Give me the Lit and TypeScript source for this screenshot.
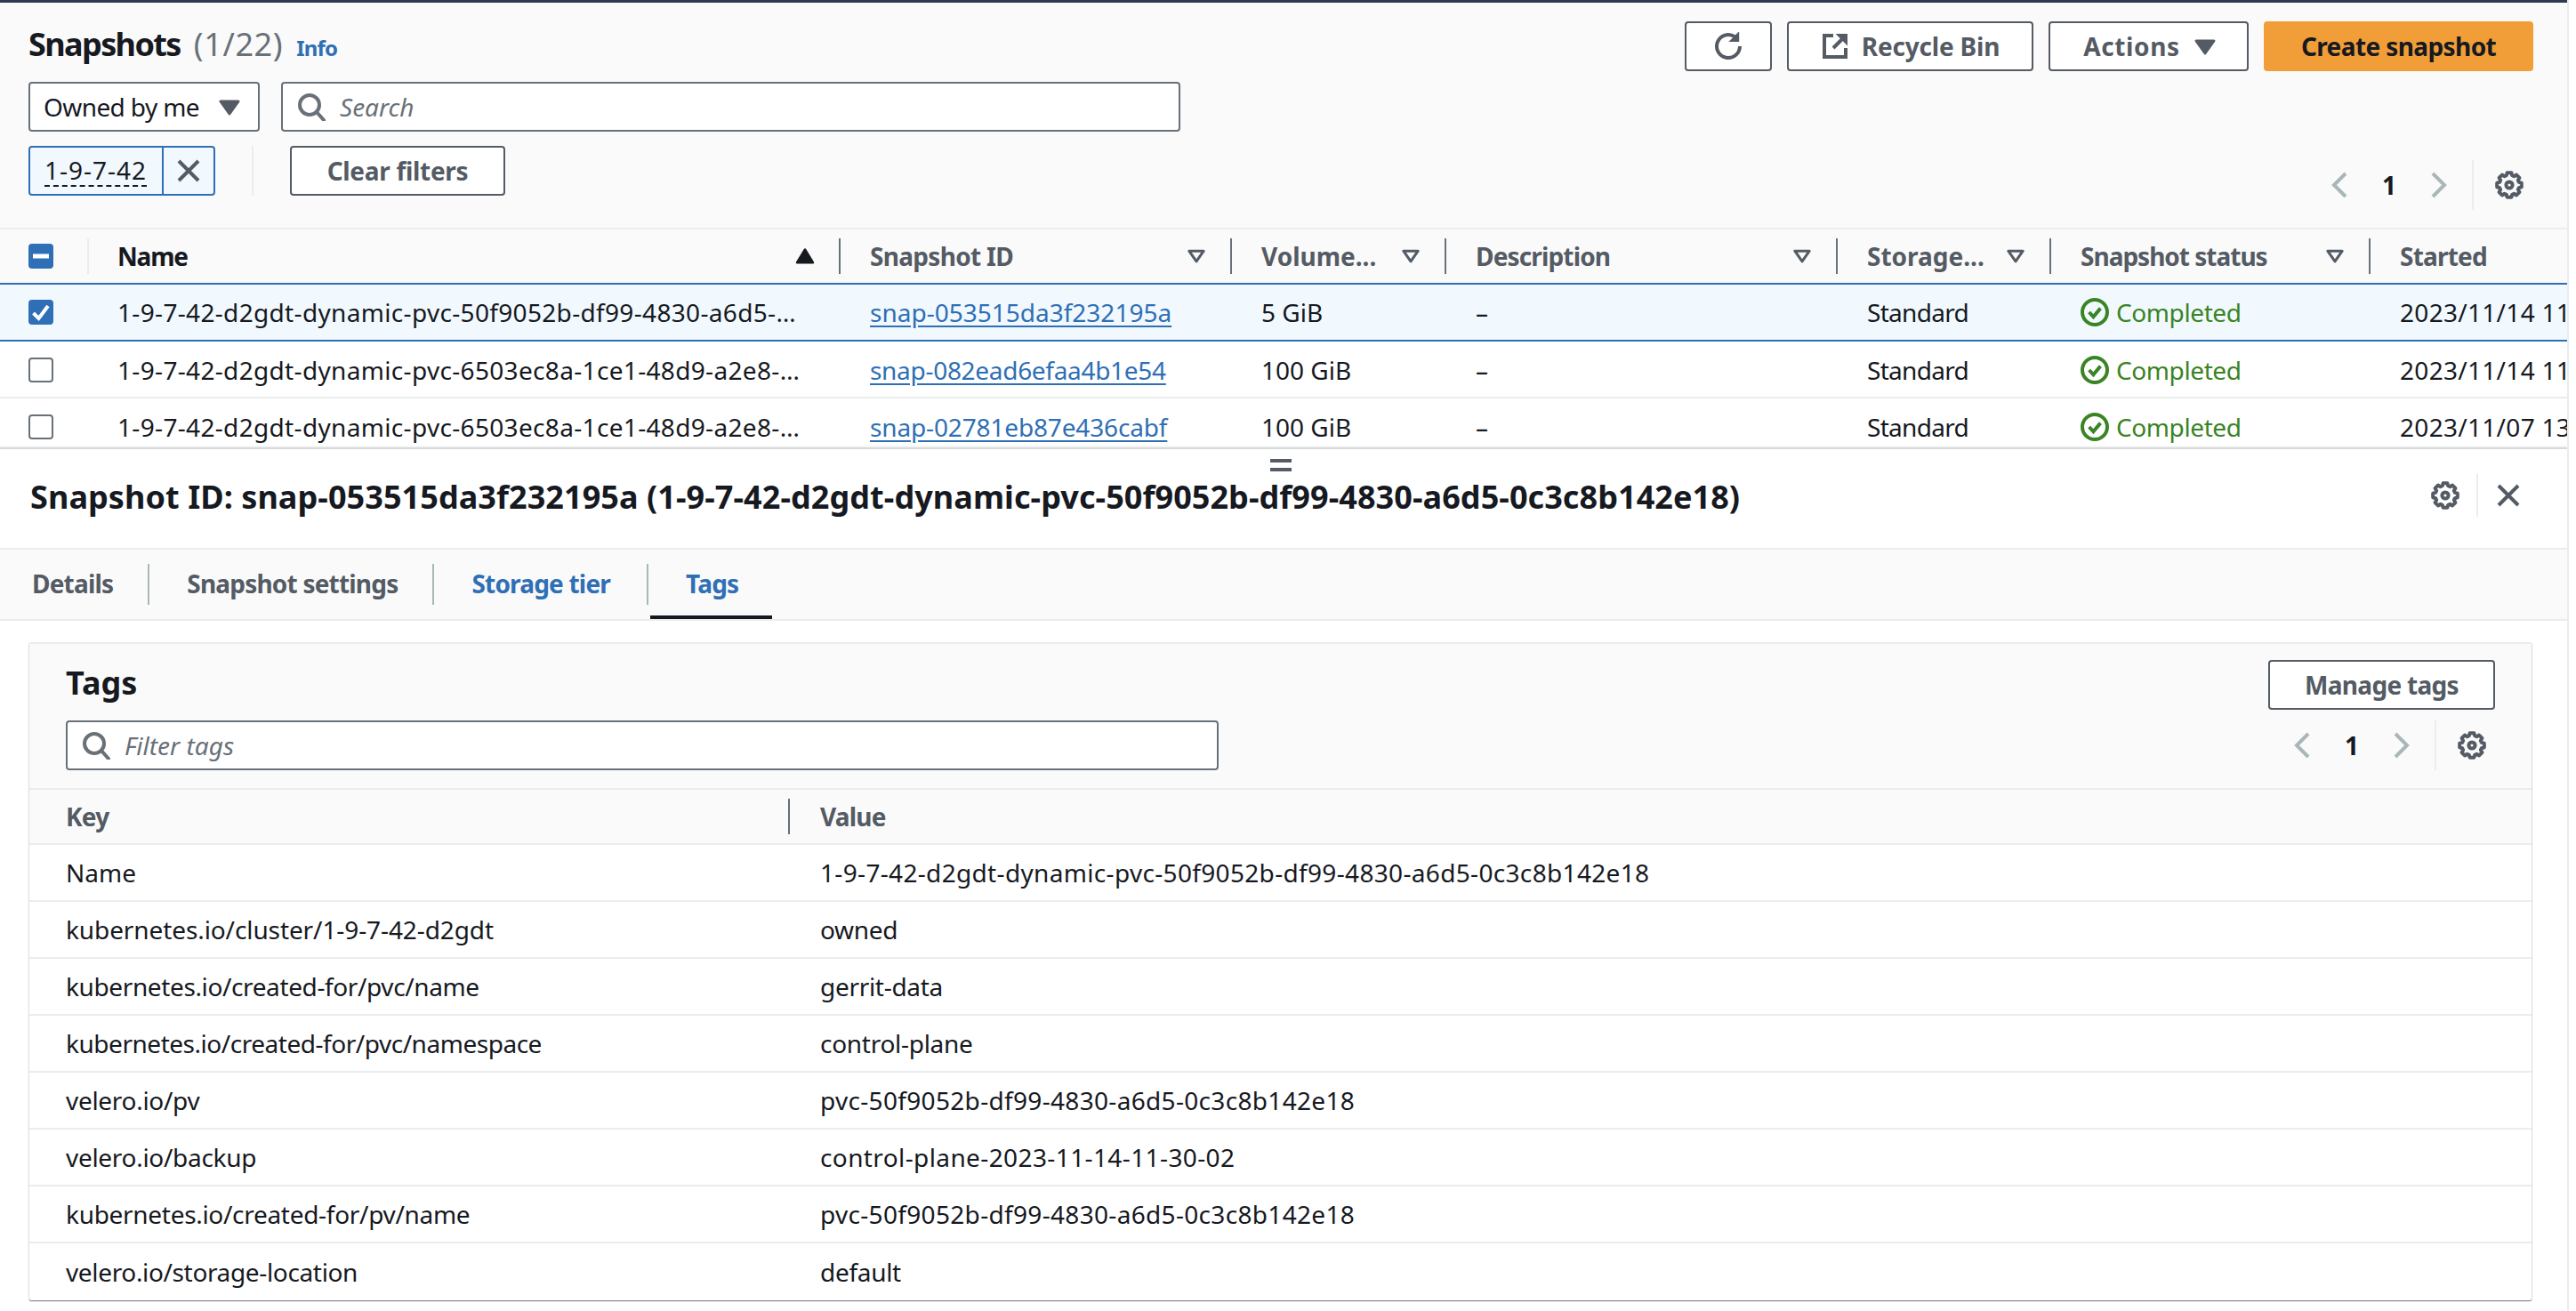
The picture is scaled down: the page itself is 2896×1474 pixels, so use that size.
import { LitElement, html, css, svg } from 'lit';
import { customElement } from 'lit/decorators.js';

const LONG_ONE = '1-9-7-42-d2gdt-dynamic-pvc-50f9052b-df99-4830-a6d5-0c3c8b142e18';
const LONG_TWO = '1-9-7-42-d2gdt-dynamic-pvc-6503ec8a-1ce1-48d9-a2e8-4c5b0f1e7a21';

const snapshots = [
  { name: LONG_ONE, id: 'snap-053515da3f232195a', idLs: 0, size: '5 GiB', started: '2023/11/14 11:30 GMT+8', selected: true },
  { name: LONG_TWO, id: 'snap-082ead6efaa4b1e54', idLs: -0.3, size: '100 GiB', started: '2023/11/14 11:30 GMT+8', selected: false },
  { name: LONG_TWO, id: 'snap-02781eb87e436cabf', idLs: -0.15, size: '100 GiB', started: '2023/11/07 13:30 GMT+8', selected: false },
];

// key, value, and the tracking each needs to land on the reference width
const tags: [string, string, number, number][] = [
  ['Name', LONG_ONE, 0, 0.33],
  ['kubernetes.io/cluster/1-9-7-42-d2gdt', 'owned', -0.1, -0.3],
  ['kubernetes.io/created-for/pvc/name', 'gerrit-data', -0.38, -0.3],
  ['kubernetes.io/created-for/pvc/namespace', 'control-plane', -0.47, -0.28],
  ['velero.io/pv', 'pvc-50f9052b-df99-4830-a6d5-0c3c8b142e18', -0.3, 0.32],
  ['velero.io/backup', 'control-plane-2023-11-14-11-30-02', -0.3, 0.39],
  ['kubernetes.io/created-for/pv/name', 'pvc-50f9052b-df99-4830-a6d5-0c3c8b142e18', -0.3, 0.32],
  ['velero.io/storage-location', 'default', -0.35, -0.3],
];

const columns = [
  { label: 'Snapshot ID', icon: true, ls: -0.7 },
  { label: 'Volume...', icon: true, ls: 0 },
  { label: 'Description', icon: true, ls: -0.85 },
  { label: 'Storage...', icon: true, ls: 0 },
  { label: 'Snapshot status', icon: true, ls: -1 },
  { label: 'Started', icon: false, ls: -0.8 },
];

// eight tooth gear outline in a 16 unit box
function gearPath() {
  const pts: string[] = [];
  for (let i = 0; i < 8; i++) {
    const a = (i * Math.PI) / 4 - Math.PI / 2;
    const step = 0.17;
    const at = (r: number, t: number) =>
      `${(8 + r * Math.cos(t)).toFixed(2)} ${(8 + r * Math.sin(t)).toFixed(2)}`;
    pts.push(at(5.6, a - step * 1.7), at(7, a - step), at(7, a + step), at(5.6, a + step * 1.7));
  }
  return 'M' + pts.join('L') + 'Z';
}
const GEAR = gearPath();

const icon = (body: unknown, cls = '') =>
  html`<svg class="icon ${cls}" viewBox="0 0 16 16" fill="none" stroke="currentColor" stroke-width="2">${body}</svg>`;

const icons = {
  refresh: () => icon(svg`<path d="M14.5 8A6.5 6.5 0 1 1 11.6 2.6"/><path d="M13.6 .8v4.2H9.4z" fill="currentColor" stroke-width="1"/>`),
  external: () => icon(svg`<path d="M7 2H2v12h12V9"/><path d="M9.5 1.5h5v5z" fill="currentColor" stroke-width="1"/><path d="M13 3L7 9"/>`),
  gear: () => icon(svg`<path d=${GEAR} stroke-linejoin="round"/><circle cx="8" cy="8" r="1.8"/>`),
  search: () => icon(svg`<circle cx="7" cy="7" r="5.5"/><path d="M11 11l4 4.5" stroke-linecap="round"/>`),
  close: () => icon(svg`<path d="M2.5 2.5l11 11M13.5 2.5l-11 11"/>`),
  caret: () => icon(svg`<path d="M3 5h10l-5 7z" fill="currentColor" stroke-width="1.5" stroke-linejoin="round"/>`),
  filter: () => icon(svg`<path d="M3.9 5.1h8.2L8 10.9z" stroke-width="1.5" stroke-linejoin="round"/>`),
  sortUp: () => icon(svg`<path d="M8 4.4l4.4 7.2H3.6z" fill="currentColor" stroke-width="1.4" stroke-linejoin="round"/>`),
  left: () => icon(svg`<path d="M11.5 1.5L5 8l6.5 6.5"/>`),
  right: () => icon(svg`<path d="M4.5 1.5L11 8l-6.5 6.5"/>`),
  success: () => icon(svg`<circle cx="8" cy="8" r="7"/><path d="M4.8 8l2.4 2.6 4-4.8"/>`, 'success'),
};

@customElement('app-root')
export class AppRoot extends LitElement {
  static styles = css`
    :host {
      display: block;
      width: 2896px;
      height: 1474px;
      overflow: hidden;
      background: #fff;
      color: #16191f;
      font-family: 'Noto Sans', 'Liberation Sans', sans-serif;
      font-size: 28px;
      line-height: 40px;
    }
    * { box-sizing: border-box; }
    .shell { display: flex; height: 100%; }
    .main { width: 2886px; flex: none; display: flex; flex-direction: column; overflow: hidden; position: relative; }
    .gutter { flex: 1; border-left: 2px solid #eaeded; }

    .icon { width: 32px; height: 32px; display: block; flex: none; }
    .icon.success { color: #3a8424; }

    .top { height: 503px; flex: none; background: #fafafa; border-top: 3px solid #2f3b4d; overflow: hidden; }
    .head { height: 253px; padding: 21px 38px 0 32px; }
    .title-row { display: flex; align-items: center; justify-content: space-between; height: 56px; }
    .title { font-size: 36px; font-weight: 700; display: flex; align-items: baseline; letter-spacing: -1.6px; }
    .title .count { font-weight: 400; color: #687078; margin-left: 15px; letter-spacing: .6px; }
    .info { font-size: 24px; font-weight: 700; color: #2f6fb5; margin-left: 15px; letter-spacing: -.8px; }
    .actions { display: flex; gap: 17px; }
    .btn {
      height: 56px; border: 2px solid #545b64; border-radius: 4px; background: #fff;
      display: flex; align-items: center; justify-content: center; gap: 14px;
      font-weight: 700; color: #545b64; white-space: nowrap;
    }
    .btn.refresh { width: 98px; }
    .btn.recycle { width: 277px; letter-spacing: -.2px; }
    .btn.actions-btn { width: 225px; gap: 12px; padding-left: 6px; letter-spacing: .6px; }
    .btn.create { width: 303px; background: #f29e38; border-color: #f29e38; color: #16191f; letter-spacing: -.6px; }
    .btn.clear { width: 242px; letter-spacing: -.3px; }
    .btn.manage { width: 255px; letter-spacing: -.7px; }

    .search-row { display: flex; gap: 24px; margin-top: 12px; }
    .select {
      width: 260px; height: 56px; border: 2px solid #687078; border-radius: 4px; background: #fff;
      display: flex; align-items: center; justify-content: space-between; padding: 0 16px 0 15px; letter-spacing: -.6px;
    }
    .select .icon { color: #545b64; }
    .input {
      height: 56px; border: 2px solid #687078; border-radius: 4px; background: #fff;
      display: flex; align-items: center; gap: 16px; padding: 0 16px; color: #687078; font-style: italic;
    }
    .input .icon { color: #687078; }
    .input.search { width: 1011px; }
    .input.filter { width: 1296px; }

    .filter-row { display: flex; justify-content: space-between; align-items: flex-start; margin-top: 16px; }
    .filters { display: flex; align-items: center; height: 56px; }
    .token { display: flex; height: 56px; width: 210px; border: 2px solid #2f6fb5; border-radius: 4px; background: #f1f9fe; }
    .token-label { width: 148px; padding-left: 16px; display: flex; align-items: center; letter-spacing: 1px; }
    .token-label span { border-bottom: 2px dashed #16191f; line-height: 34px; }
    .token-x { flex: 1; border-left: 2px solid #2f6fb5; display: flex; align-items: center; justify-content: center; color: #545b64; }
    .vsep { width: 2px; height: 56px; background: #eaeded; margin: 0 41px; }
    .pager { display: flex; align-items: center; height: 56px; }
    .pager .chev { color: #aab7b8; }
    .pager .num { width: 80px; text-align: center; font-weight: 700; }
    .pager .sep { width: 2px; height: 56px; background: #eaeded; margin: 0 24px 0 21px; }
    .pager .gear { color: #545b64; }
    .pager.outer { margin-top: 16px; margin-right: 11px; }
    .pager.inner { margin-right: 10px; }

    .grid { display: grid; grid-template-columns: 99px 846px 440px 241px 440px 240px 359px 300px; }
    .thead { height: 64px; border-top: 2px solid #eaeded; border-bottom: 2px solid #eaeded; background: #fafafa; }
    .th {
      display: flex; align-items: center; justify-content: space-between; position: relative;
      padding: 0 24px 0 33px; font-weight: 700; color: #545b64; white-space: nowrap;
    }
    .th.sorted { color: #16191f; letter-spacing: -1.2px; }
    .th::before {
      content: ''; position: absolute; left: -2px; top: 10px; bottom: 10px; width: 2px; background: #687078;
    }
    .th.select-col { padding-left: 32px; }
    .th.select-col::before { display: none; }
    .th.name::before { background: #eaeded; left: -1px; }
    .tr { height: 64px; padding-top: 1px; border-bottom: 2px solid #eaeded; background: #fff; }
    .tr.selected { background: #f1f9fe; border-top: 2px solid #2f6fb5; border-bottom: 2px solid #2f6fb5; margin-top: -2px; height: 66px; padding-top: 0; }
    .td { display: flex; align-items: center; padding: 0 0 0 33px; white-space: nowrap; min-width: 0; overflow: hidden; }
    .td.name-cell { padding-right: 36px; letter-spacing: .33px; }
    .td.storage { letter-spacing: -.7px; }
    .td.date { letter-spacing: .3px; }
    .ellipsis { overflow: hidden; text-overflow: ellipsis; }
    .td.check { padding-left: 32px; }
    .check-box { width: 28px; height: 28px; border-radius: 4px; border: 2px solid #687078; background: #fff; display: flex; align-items: center; justify-content: center; }
    .check-box.on { background: #2f6fb5; border-color: #2f6fb5; color: #fff; }
    .check-box svg { width: 24px; height: 24px; display: block; }
    .link { color: #2f6fb5; text-decoration: underline; text-underline-offset: 4px; }
    .status { display: flex; align-items: center; gap: 8px; color: #3a8424; letter-spacing: -.4px; }

    .handle {
      position: absolute; left: 1428px; top: 516px; width: 24px; height: 14px;
      border-top: 4px solid #545b64; border-bottom: 4px solid #545b64;
    }

    .panel { flex: 1; border-top: 2px solid #d5dbdb; box-shadow: 0 -1px 2px rgba(0, 0, 0, .08); background: #fff; }
    .panel-head { height: 111px; display: flex; align-items: center; justify-content: space-between; padding: 0 50px 4px 34px; }
    .panel-title { font-size: 36px; font-weight: 700; white-space: nowrap; letter-spacing: .07px; }
    .panel-tools { display: flex; align-items: center; color: #545b64; margin-top: -4px; }
    .panel-tools .sep { width: 2px; height: 48px; background: #eaeded; margin: 0 18px 0 19px; }
    .tabs { height: 82px; display: flex; background: #fafafa; border-top: 2px solid #eaeded; border-bottom: 2px solid #eaeded; }
    .tab { position: relative; display: flex; align-items: center; padding: 0 40px 2px 43px; font-weight: 700; color: #545b64; white-space: nowrap; letter-spacing: -.8px; }
    .tab:first-child { padding-left: 36px; }
    .tab:nth-child(3) { padding-right: 42px; }
    .tab + .tab::before { content: ''; position: absolute; left: -1px; top: 16px; bottom: 16px; width: 2px; background: #aab7b8; }
    .tab.blue { color: #2f6fb5; }
    .tab.active { padding-right: 38px; }
    .tab.active::after { content: ''; position: absolute; left: 3px; right: 0; bottom: 0; height: 4px; background: #16191f; }

    .card { margin: 24px 40px 0 33px; height: 740px; border-top: 2px solid #eaeded; border-radius: 2px; box-shadow: 0 1px 1px rgba(0, 28, 36, .45), 1px 1px 1px rgba(0, 28, 36, .12), -1px 1px 1px rgba(0, 28, 36, .12); }
    .card-head { height: 162px; background: #fafafa; padding: 18px 41px 0 41px; display: flex; justify-content: space-between; }
    .card-left { display: flex; flex-direction: column; gap: 12px; }
    .card-title { font-size: 36px; font-weight: 700; height: 56px; line-height: 52px; }
    .card-right { display: flex; flex-direction: column; align-items: flex-end; gap: 12px; }
    .tags-grid { display: grid; grid-template-columns: 855px 1fr; }
    .tags-head { height: 64px; background: #fafafa; border-top: 2px solid #eaeded; border-bottom: 2px solid #eaeded; letter-spacing: -.8px; }
    .tags-head .th { padding-left: 41px; }
    .tags-head .th + .th { padding-left: 34px; }
    .tags-head .th:first-child::before { display: none; }
    .tags-row { height: 64px; border-bottom: 2px solid #eaeded; }
    .tags-row:last-child { border-bottom: none; }
    .tags-row .td:first-child { padding-left: 41px; }
    .tags-row .td + .td { padding-left: 34px; }
  `;

  renderCheck(kind: string) {
    if (kind === 'minus') {
      return html`<div class="check-box on"><svg viewBox="0 0 24 24"><rect x="3" y="9.5" width="18" height="5" fill="currentColor"></rect></svg></div>`;
    }
    if (kind === 'on') {
      return html`<div class="check-box on"><svg viewBox="0 0 24 24" fill="none" stroke="currentColor" stroke-width="4"><path d="M3.5 13l6 6L20 5"></path></svg></div>`;
    }
    return html`<div class="check-box"></div>`;
  }

  renderPager(cls: string) {
    return html`<div class="pager ${cls}">
      <span class="chev">${icons.left()}</span>
      <span class="num">1</span>
      <span class="chev">${icons.right()}</span>
      <span class="sep"></span>
      <span class="gear">${icons.gear()}</span>
    </div>`;
  }

  renderHead() {
    return html`<div class="head">
      <div class="title-row">
        <div class="title">Snapshots <span class="count">(1/22)</span><span class="info">Info</span></div>
        <div class="actions">
          <div class="btn refresh">${icons.refresh()}</div>
          <div class="btn recycle">${icons.external()}Recycle Bin</div>
          <div class="btn actions-btn">Actions${icons.caret()}</div>
          <div class="btn create">Create snapshot</div>
        </div>
      </div>
      <div class="search-row">
        <div class="select">Owned by me${icons.caret()}</div>
        <div class="input search">${icons.search()}Search</div>
      </div>
      <div class="filter-row">
        <div class="filters">
          <div class="token">
            <div class="token-label"><span>1-9-7-42</span></div>
            <div class="token-x">${icons.close()}</div>
          </div>
          <span class="vsep"></span>
          <div class="btn clear">Clear filters</div>
        </div>
        ${this.renderPager('outer')}
      </div>
    </div>`;
  }

  renderTable() {
    return html`
      <div class="grid thead">
        <div class="th select-col">${this.renderCheck('minus')}</div>
        <div class="th name sorted">Name${icons.sortUp()}</div>
        ${columns.map(
          (c) => html`<div class="th"><span style="letter-spacing:${c.ls}px">${c.label}</span>${c.icon ? icons.filter() : ''}</div>`
        )}
      </div>
      ${snapshots.map(
        (s) => html`<div class="grid tr ${s.selected ? 'selected' : ''}">
          <div class="td check">${this.renderCheck(s.selected ? 'on' : 'off')}</div>
          <div class="td name-cell"><span class="ellipsis">${s.name}</span></div>
          <div class="td"><span class="link" style="letter-spacing:${s.idLs}px">${s.id}</span></div>
          <div class="td">${s.size}</div>
          <div class="td">–</div>
          <div class="td storage">Standard</div>
          <div class="td"><span class="status">${icons.success()}Completed</span></div>
          <div class="td date">${s.started}</div>
        </div>`
      )}
    `;
  }

  renderPanel() {
    return html`<section class="panel">
      <div class="panel-head">
        <div class="panel-title">Snapshot ID: snap-053515da3f232195a (${LONG_ONE})</div>
        <div class="panel-tools">${icons.gear()}<span class="sep"></span>${icons.close()}</div>
      </div>
      <div class="tabs">
        <div class="tab">Details</div>
        <div class="tab">Snapshot settings</div>
        <div class="tab blue">Storage tier</div>
        <div class="tab blue active">Tags</div>
      </div>
      <div class="card">
        <div class="card-head">
          <div class="card-left">
            <div class="card-title">Tags</div>
            <div class="input filter">${icons.search()}Filter tags</div>
          </div>
          <div class="card-right">
            <div class="btn manage">Manage tags</div>
            ${this.renderPager('inner')}
          </div>
        </div>
        <div class="tags-grid tags-head">
          <div class="th">Key</div>
          <div class="th">Value</div>
        </div>
        ${tags.map(
          ([k, v, kLs, vLs]) => html`<div class="tags-grid tags-row">
            <div class="td" style="letter-spacing:${kLs}px">${k}</div>
            <div class="td" style="letter-spacing:${vLs}px">${v}</div>
          </div>`
        )}
      </div>
    </section>`;
  }

  render() {
    return html`<div class="shell">
      <div class="main">
        <section class="top">${this.renderHead()}${this.renderTable()}</section>
        <div class="handle"></div>
        ${this.renderPanel()}
      </div>
      <div class="gutter"></div>
    </div>`;
  }
}
